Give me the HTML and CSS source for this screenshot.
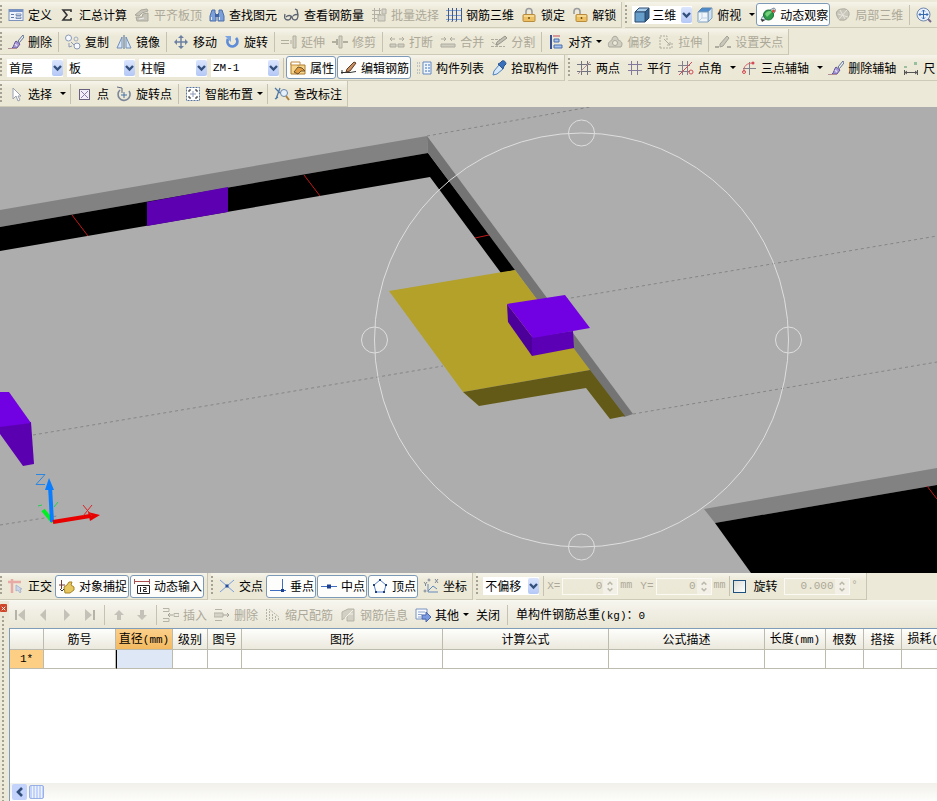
FILE: index.html
```html
<!DOCTYPE html>
<html lang="zh-CN">
<head>
  <meta charset="UTF-8" />
  <meta name="viewport" content="width=device-width, initial-scale=1.0"/>
  <title>钢筋三维</title>
  <link rel="stylesheet" href="styles.css">
</head>
<body>

  <!-- icon sprite -->
  <svg class="sprite" aria-hidden="true">
    <symbol id="define" viewBox="0 0 16 16"><rect x="1" y="2.500" width="14" height="11" fill="#eef3fb" stroke="#7d93bb"/><path d="M1 3h14v2H1z" fill="#7391c8"/><path d="M3 7.500h3M3 10.500h3" stroke="#5f78a8"/><path d="M8 7h5v1.500H8zM8 10h5v1.500H8z" fill="#fff" stroke="#5f78a8" stroke-width=".8"/></symbol>
    <symbol id="sum" viewBox="0 0 16 16"><path d="M12 5V3H4l4 5-4 5h8v-2" fill="none" stroke="#333" stroke-width="1.600"/></symbol>
    <symbol id="level" viewBox="0 0 16 16"><path d="M1 8l6-5 6-1 1 2-6 2-3 3zM2 10h6l1-3 5-1v8H3z" fill="#c6c4b8" stroke="#aaa89c"/><path d="M5 12l5-1" stroke="#eee"/></symbol>
    <symbol id="find" viewBox="0 0 16 16"><path d="M3 3h3v3l1 1V14H1V9zM10 3h3l2 6v5H9V7l1-1z" fill="#7d9fd8" stroke="#4c6eaa"/><path d="M6 7h4v3H6z" fill="#41639e"/><path d="M2.500 10v3M10.500 10v3" stroke="#dbe6f8"/></symbol>
    <symbol id="glasses" viewBox="0 0 16 16"><path d="M1 7c-1 4 0 6 3 6 2 0 3-2 3-4-2-1-4 0-5 1M8 9c0 3 1 4 3 4 3 0 3-3 3-5-2-1-4 0-5 1M14 8l-1-5-2-1" fill="none" stroke="#5b6270" stroke-width="1.300"/></symbol>
    <symbol id="batch" viewBox="0 0 16 16"><path d="M1 3.500h9M1 7.500h9M1 11.500h5M3.500 1v14M8.500 1v7" stroke="#b2b0a4" fill="none"/><path d="M7 8h7v6H7zM11 2h4v5h-4z" fill="#d6d4c8" stroke="#b2b0a4"/></symbol>
    <symbol id="mesh" viewBox="0 0 16 16"><path d="M0 3.500h16M0 8.500h16M0 12.500h16" stroke="#7fa0d4" fill="none"/><path d="M2.500 1v13l-1 1M6.500 1v13l-1 1M10.500 1v13l-1 1M15.500 1v14" stroke="#41598c" fill="none"/></symbol>
    <symbol id="lock" viewBox="0 0 16 16"><path d="M5 8V4.500a3 3 0 0 1 6 0V8" fill="none" stroke="#999b9f" stroke-width="1.600"/><rect x="2" y="7.500" width="12" height="7" rx="1" fill="#edc063" stroke="#b88c3c"/><path d="M3 9h10" stroke="#fff0bb"/><path d="M8 10v2" stroke="#765414" stroke-width="1.500"/></symbol>
    <symbol id="unlock" viewBox="0 0 16 16"><path d="M2 7V4.500a3 3 0 0 1 6 0V8" fill="none" stroke="#999b9f" stroke-width="1.600"/><rect x="4" y="7.500" width="11" height="7" rx="1" fill="#edc063" stroke="#b88c3c"/><path d="M5 9h9" stroke="#fff0bb"/><path d="M9.500 10v2" stroke="#765414" stroke-width="1.500"/></symbol>
    <symbol id="cube" viewBox="0 0 16 16"><path d="M1 5l4-4h10l-4 4z" fill="#a8cdec" stroke="#2d4a6c"/><path d="M11 5l4-4v10l-4 4z" fill="#33618f" stroke="#2d4a6c"/><path d="M1 5h10v10H1z" fill="#669fcc" stroke="#2d4a6c"/></symbol>
    <symbol id="topview" viewBox="0 0 16 16"><path d="M1 5l4-4h10l-4 4z" fill="#4c8ccc" stroke="#5d83ad"/><path d="M11 5l4-4v10l-4 4z" fill="#cfe0f0" stroke="#7f9fc0"/><path d="M1 5h10v10H1z" fill="#f1f6fb" stroke="#7f9fc0"/><path d="M5 5v6l-4 4M5 11h6" stroke="#bdd0e4" fill="none"/></symbol>
    <symbol id="orbit" viewBox="0 0 16 16"><path d="M1 13C2 9 7 4 14 1c2 1 2 3 0 5-4 5-8 7-11 7z" fill="#dfe9ee" stroke="#6d8798"/><circle cx="8.500" cy="8" r="5" fill="#2c9a48" stroke="#1c6d35"/><path d="M5 7c2-3 5-4 7-2l-5 5z" fill="#74d07a"/><circle cx="13.500" cy="4" r="1.500" fill="#d54531"/><path d="M1 12l4 1-3 2z" fill="#333"/></symbol>
    <symbol id="local3d" viewBox="0 0 16 16"><path d="M2 9c-2-4 1-7 5-7 4-1 8 2 7 6-1 4-5 6-7 5-3 1-4-2-5-4z" fill="#c8c6bb" stroke="#aeaca0"/><path d="M3 7l10 3M5 3l5 9M12 3L4 12" stroke="#e8e6dc" fill="none"/></symbol>
    <symbol id="pan" viewBox="0 0 16 16"><circle cx="7.500" cy="7.500" r="6.500" fill="#e6effb" stroke="#7188ad"/><path d="M7.500 3v9M3 7.500h9M6 4.500L7.500 3 9 4.500M6 10.500L7.500 12 9 10.500M4.500 6L3 7.500 4.500 9M10.500 6L12 7.500 10.500 9" stroke="#3866af" fill="none"/><path d="M12 12l3 3" stroke="#7a6a90" stroke-width="2"/></symbol>
    <symbol id="brush" viewBox="0 0 16 16"><path d="M15 1l-5 6 1.500 1.500L16 3z" fill="#e8eef6" stroke="#667391"/><path d="M8 7l4 3-3 4H4c2-1 2-5 4-7z" fill="#a89bd8" stroke="#65549a"/><path d="M7 10l2 2" stroke="#e2d9f3" stroke-width="1.500"/><path d="M0 14.500h9" stroke="#b08d95"/></symbol>
    <symbol id="copy" viewBox="0 0 16 16"><circle cx="3.500" cy="4" r="3" fill="#f6f9fd" stroke="#8b99b4"/><circle cx="12" cy="12" r="3" fill="#f6f9fd" stroke="#8b99b4"/><circle cx="11" cy="5" r="2" fill="none" stroke="#a1adc4"/><path d="M6 8l3 3M4 9v4l3-1" stroke="#8b99b4" fill="none"/></symbol>
    <symbol id="mirror" viewBox="0 0 16 16"><path d="M6 3v11H1zM10 3v11h5z" fill="#d7e5f5" stroke="#718fb8"/><path d="M8 1v14" stroke="#4f6e98"/></symbol>
    <symbol id="move" viewBox="0 0 16 16"><path d="M8 2v12M2 8h12" stroke="#6d80a2" stroke-width="1.500"/><path d="M8 1l3 3H5zM8 15l3-3H5zM1 8l3-3v6zM15 8l-3-3v6z" fill="#6d80a2"/></symbol>
    <symbol id="rotate" viewBox="0 0 16 16"><path d="M4 5a5 5 0 1 0 8-1" fill="none" stroke="#5f8cd8" stroke-width="2.800"/><path d="M1 2h6v6z" fill="#7ca4e2"/></symbol>
    <symbol id="extend" viewBox="0 0 16 16"><path d="M0 6.500h8M0 9.500h8M10 6v4" stroke="#b0ae9f" fill="none"/><path d="M12 2h3v12h-3z" fill="#d5d2c3" stroke="#b0ae9f"/></symbol>
    <symbol id="trim" viewBox="0 0 16 16"><path d="M0 8h5M11 8h5M5 5v6" stroke="#b0ae9f" stroke-width="2"/><path d="M7 2h3v12H7z" fill="#d5d2c3" stroke="#b0ae9f"/></symbol>
    <symbol id="break" viewBox="0 0 16 16"><path d="M1 10h6v3H1zM9 10h6v3H9z" fill="#d0cec0" stroke="#aeac9f"/><path d="M1 5h5M10 5h5M3 3L1 5l2 2M13 3l2 2-2 2" stroke="#aeac9f" fill="none"/></symbol>
    <symbol id="join" viewBox="0 0 16 16"><path d="M1 10h14v3H1z" fill="#d0cec0" stroke="#aeac9f"/><path d="M1 5h5M10 5h5M4 3l2 2-2 2M12 3l-2 2 2 2" stroke="#aeac9f" fill="none"/></symbol>
    <symbol id="split" viewBox="0 0 16 16"><path d="M0 5.500h9M0 12.500h14M1 8l6 4" fill="none" stroke="#aeac9f" stroke-dasharray="3 1"/><path d="M5 11l1-3 8-6 2 2-8 6z" fill="#c2c0b4" stroke="#98968b"/></symbol>
    <symbol id="align" viewBox="0 0 16 16"><path d="M3 1v14" stroke="#374f91" stroke-width="2"/><path d="M6 5h5v3H6zM6 11h8v3H6z" fill="#a9c4ed" stroke="#4b6fad"/><path d="M12 2H5" stroke="#c5485a"/></symbol>
    <symbol id="offset" viewBox="0 0 16 16"><path d="M2 13c-2-4 1-6 3-7 0-5 6-5 6 0 4 1 5 4 3 7z" fill="#d0cec0" stroke="#aaa89c"/><circle cx="8" cy="9" r="2.500" fill="#ece9d8" stroke="#aaa89c"/></symbol>
    <symbol id="stretch" viewBox="0 0 16 16"><path d="M2 14V2h7v4M2 14h12V9" stroke="#aeac9f" fill="none" stroke-dasharray="2 1"/><path d="M6 5l6 6M12 8v3H9" stroke="#aeac9f" fill="none"/></symbol>
    <symbol id="grip" viewBox="0 0 16 16"><path d="M0 12h4v2H0zM12 12h4v2h-4z" fill="#aeac9f"/><path d="M5 10l7-8 2 2-6 8-3 1z" fill="#c9c7ba" stroke="#a3a196"/></symbol>
    <symbol id="props" viewBox="0 0 16 16"><path d="M1 3h5l1 2h8v9H1z" fill="#f7d68b" stroke="#ad7a2d"/><path d="M1 2h9v3H1z" fill="#fff" stroke="#c18d42"/><path d="M4 12l4-5 4 1 3 3-4 0-3 3z" fill="#e29d42" stroke="#6e5330"/></symbol>
    <symbol id="edit" viewBox="0 0 16 16"><path d="M0 12.500h9l6-1" stroke="#333" fill="none"/><path d="M6 9l7-7 2 1-6 8-4 1z" fill="#c98f61" stroke="#5b3b24"/><path d="M1 10v4" stroke="#333"/></symbol>
    <symbol id="list" viewBox="0 0 16 16"><path d="M1 3h3M1 6h3M1 10h3M1 13h3" stroke="#8f9bb0" stroke-dasharray="1 1"/><path d="M7 2h8v12H7z" fill="#eef5fd" stroke="#6687bd"/><path d="M9 5h2M9 8h2M9 11h2M12 5h2M12 8h2M12 11h2" stroke="#3d70b8"/></symbol>
    <symbol id="picker" viewBox="0 0 16 16"><path d="M8 5l4 4-6 5-4 1 1-4z" fill="#d5e9fa" stroke="#5282bc"/><path d="M7 4l2-1 2-2c2-1 4 1 4 3l-2 2-1 3z" fill="#3a70bb" stroke="#2b558f"/></symbol>
    <symbol id="twopoint" viewBox="0 0 16 16"><path d="M5.500 1v14M11.500 1v14M1 4.500h14M1 11.500h14" stroke="#72757f"/><path d="M2 14L14 2" stroke="#b19298"/></symbol>
    <symbol id="parallel" viewBox="0 0 16 16"><path d="M4.500 1v14M10.500 1v14" stroke="#83799d"/><path d="M1 4.500h14M1 10.500h14" stroke="#83799d"/></symbol>
    <symbol id="pointangle" viewBox="0 0 16 16"><path d="M4.500 1v14M9.500 1v14M0 5.500h12M0 11.500h12" stroke="#81808c"/><path d="M1 15L14 2" stroke="#d44b56"/><circle cx="13" cy="12" r="2" fill="none" stroke="#d44b56"/></symbol>
    <symbol id="threepoint" viewBox="0 0 16 16"><path d="M8.500 2v13M2 8.500h13" stroke="#81808c"/><path d="M3 12c-1-6 3-9 9-9" stroke="#d4656a" fill="none"/><circle cx="3" cy="12" r="1.500" fill="none" stroke="#d44b56"/><circle cx="12" cy="3" r="1.500" fill="#d44b56"/></symbol>
    <symbol id="ruler" viewBox="0 0 16 16"><path d="M1.500 10v5M14.500 10v5M2 12.500h12M4 11l-2 1.500L4 14M12 11l2 1.500L12 14" stroke="#555" fill="none"/><path d="M1 6h3v2H1zM11 2h3v3h-3z" fill="#9abf9f"/></symbol>
    <symbol id="pointer" viewBox="0 0 16 16"><path d="M5 2v11l3-3 2 5 2-1-2-4h3z" fill="#fff" stroke="#9aa0b0"/></symbol>
    <symbol id="point" viewBox="0 0 16 16"><rect x="2.500" y="3.500" width="10" height="10" fill="#f3eff8" stroke="#69617f"/><path d="M4 5l7 7M11 5l-7 7" stroke="#8d77ac"/></symbol>
    <symbol id="rotpoint" viewBox="0 0 16 16"><path d="M4 4a6 6 0 1 0 9 1" fill="none" stroke="#7c8798" stroke-width="1.600"/><path d="M1 1l5 1v5" fill="none" stroke="#606b80"/><path d="M8 6v6M5 9h6" stroke="#4771a9"/></symbol>
    <symbol id="smart" viewBox="0 0 16 16"><rect x="1.500" y="1.500" width="13" height="13" fill="#fff" stroke="#5774a0" stroke-dasharray="2 1"/><path d="M8 5v6M5 8h6" stroke="#8b98b0"/><path d="M4 6V4h2M10 4h2v2M4 10v2h2M12 10v2h-2" fill="none" stroke="#222"/></symbol>
    <symbol id="check" viewBox="0 0 16 16"><path d="M1 2l5 5M6 2L2 13M1 13l3-2" stroke="#4e78a8" fill="none" stroke-width="1.300"/><circle cx="10" cy="7" r="3.500" fill="#e5f0fb" stroke="#6684ab"/><path d="M12 10l3 4" stroke="#b0813e" stroke-width="2"/></symbol>
    <symbol id="ortho" viewBox="0 0 16 16"><path d="M0 4h13M4 1v14" stroke="#e7aaa4" stroke-width="2.500"/><path d="M8 7v6l2-1 2 3 1-1-1-3h2z" fill="#ccd5ea" stroke="#9daac8" stroke-width=".7"/></symbol>
    <symbol id="snap" viewBox="0 0 16 16"><path d="M2.500 2v9M0 7h6" stroke="#6f3b38"/><path d="M5 9l3-2 2-3h3l-1 3 3 2v3l-4 3H6z" fill="#e5c65f" stroke="#a68429"/><path d="M1 11l2 2 2-2" fill="none" stroke="#333"/></symbol>
    <symbol id="dyninput" viewBox="0 0 16 16"><path d="M0 3.500h16M.5 1v5M15.500 1v5" stroke="#a94f4f"/><path d="M3.500 7.500h12v8h-12z" fill="#fff" stroke="#222"/><path d="M6.500 9v5M9 9.500h3V11.500H9.500v2H13" stroke="#222" fill="none"/></symbol>
    <symbol id="cross" viewBox="0 0 16 16"><path d="M1 2l14 12M15 2L1 14" stroke="#7b9ede"/><path d="M6.500 6.500h3v3h-3z" fill="#264c9e"/></symbol>
    <symbol id="perp" viewBox="0 0 16 16"><path d="M0 12.500h16M12.500 1v12" stroke="#3f6ec0"/><path d="M11 11h3v3h-3z" fill="#1c3f90"/></symbol>
    <symbol id="mid" viewBox="0 0 16 16"><path d="M0 8.500h16" stroke="#3f6ec0"/><path d="M6 6.500h4v4H6z" fill="#1c3f90"/></symbol>
    <symbol id="vertex" viewBox="0 0 16 16"><path d="M8 2l6 5-2 7H4L2 7z" fill="none" stroke="#5682d0"/><path d="M7 1h2v2H7zM13 6h2v2h-2zM1 6h2v2H1zM3 13h2v2H3zM11 13h2v2h-2z" fill="#1f3f80"/></symbol>
    <symbol id="coord" viewBox="0 0 16 16"><path d="M5 6v8h10M5 13l5-5 4 3" stroke="#6489bd" fill="none"/><path d="M1 4l1.500 2L4 4M2.500 6v2M12 1l3 4M15 1l-3 4" stroke="#7e8795" fill="none"/><circle cx="2" cy="13" r="1" fill="none" stroke="#7e8795"/><circle cx="6" cy="2" r="1" fill="none" stroke="#7e8795"/></symbol>
    <symbol id="first" viewBox="0 0 16 16"><path d="M4 3v10" stroke="#b5b3a8" stroke-width="2"/><path d="M13 2v12L6 8z" fill="#c4c2b8"/></symbol>
    <symbol id="prev" viewBox="0 0 16 16"><path d="M11 2v12L5 8z" fill="#c4c2b8"/></symbol>
    <symbol id="next" viewBox="0 0 16 16"><path d="M6 2v12l6-6z" fill="#c4c2b8"/></symbol>
    <symbol id="last" viewBox="0 0 16 16"><path d="M13 3v10" stroke="#b5b3a8" stroke-width="2"/><path d="M4 2v12l7-6z" fill="#c4c2b8"/></symbol>
    <symbol id="up" viewBox="0 0 16 16"><path d="M9 3l5 5h-3v5H7V8H4z" fill="#c4c2b8"/></symbol>
    <symbol id="down" viewBox="0 0 16 16"><path d="M9 13l5-5h-3V3H7v5H4z" fill="#c4c2b8"/></symbol>
    <symbol id="insert" viewBox="0 0 16 16"><path d="M0 1.500h6v3H0M0 11.500h6v3H0M11 6.500h5v3h-5z" stroke="#b5b3a6" fill="none"/><path d="M5 8h5M7 6L5 8l2 2" stroke="#a6a498" fill="none"/></symbol>
    <symbol id="remove" viewBox="0 0 16 16"><path d="M1 2.500h7M1 13.500h7M0 6h9v4H0z" stroke="#b5b3a6" fill="#d5d3c7"/><path d="M9 8h6M13 6l2 2-2 2" stroke="#a6a498" fill="none"/></symbol>
    <symbol id="scale" viewBox="0 0 16 16"><path d="M1.500 2v12M4.500 4v10M7.500 7v7M10.500 9v5M13.500 11v3M4 2l10 8" stroke="#b5b3a6" stroke-dasharray="2 1" fill="none"/></symbol>
    <symbol id="info" viewBox="0 0 16 16"><path d="M2 5l6-3h6v12H7V9l-5 4z" fill="#d2d0c5" stroke="#b5b3a6"/><path d="M5 11l8-8M9 7h4" stroke="#f3f1e7"/></symbol>
    <symbol id="other" viewBox="0 0 16 16"><path d="M1 2h11v10H1z" fill="#f7faff" stroke="#7b93bf"/><path d="M3 5h7M3 7.500h4M3 10h3" stroke="#8da5cd"/><path d="M7 8h4V5l5 5-5 5v-3H7z" fill="#7999e0" stroke="#4c68ac"/></symbol>
    <symbol id="chevron" viewBox="0 0 11 16"><path d="M2 6l3.500 3.500L9 6" fill="none" stroke="#33507c" stroke-width="2.400"/></symbol>
    <symbol id="chevleft" viewBox="0 0 16 16"><path d="M10 4L6 8l4 4" fill="none" stroke="#33507c" stroke-width="2.600"/></symbol>
    <symbol id="spinner" viewBox="0 0 14 16"><path d="M4.500 6L7 3.500 9.500 6M4.500 10L7 12.500 9.500 10" fill="none" stroke="#bbb9ac" stroke-width="1.600"/></symbol>
  </svg>

  <header class="toolbars">
    <div class="row row-first">
      <div class="toolbar">
        <button class="tool"><svg class="icon"><use href="#define"/></svg>定义</button>
        <button class="tool"><svg class="icon"><use href="#sum"/></svg>汇总计算</button>
        <button class="tool" disabled><svg class="icon"><use href="#level"/></svg>平齐板顶</button>
        <button class="tool"><svg class="icon"><use href="#find"/></svg>查找图元</button>
        <button class="tool"><svg class="icon"><use href="#glasses"/></svg>查看钢筋量</button>
        <button class="tool" disabled><svg class="icon"><use href="#batch"/></svg>批量选择</button>
        <button class="tool"><svg class="icon"><use href="#mesh"/></svg>钢筋三维</button>
        <button class="tool"><svg class="icon"><use href="#lock"/></svg>锁定</button>
        <button class="tool"><svg class="icon"><use href="#unlock"/></svg>解锁</button>
      </div>
      <div class="toolbar">
        <div class="combo combo-icon">
          <svg class="icon"><use href="#cube"/></svg>
          <select aria-label="视图模式"><option>三维</option></select>
          <svg class="combo-arrow"><use href="#chevron"/></svg>
        </div>
        <button class="tool drop wide"><svg class="icon"><use href="#topview"/></svg>俯视</button>
        <button class="tool pressed" aria-pressed="true"><svg class="icon"><use href="#orbit"/></svg>动态观察</button>
        <button class="tool" disabled><svg class="icon"><use href="#local3d"/></svg>局部三维</button>
        <span class="sep"></span>
        <button class="tool" aria-label="平移"><svg class="icon"><use href="#pan"/></svg></button>
      </div>
    </div>

    <div class="row">
      <div class="toolbar">
        <button class="tool"><svg class="icon"><use href="#brush"/></svg>删除</button>
        <span class="sep"></span>
        <button class="tool"><svg class="icon"><use href="#copy"/></svg>复制</button>
        <button class="tool"><svg class="icon"><use href="#mirror"/></svg>镜像</button>
        <span class="sep"></span>
        <button class="tool"><svg class="icon"><use href="#move"/></svg>移动</button>
        <button class="tool"><svg class="icon"><use href="#rotate"/></svg>旋转</button>
        <span class="sep"></span>
        <button class="tool" disabled><svg class="icon"><use href="#extend"/></svg>延伸</button>
        <button class="tool" disabled><svg class="icon"><use href="#trim"/></svg>修剪</button>
        <span class="sep"></span>
        <button class="tool" disabled><svg class="icon"><use href="#break"/></svg>打断</button>
        <button class="tool" disabled><svg class="icon"><use href="#join"/></svg>合并</button>
        <button class="tool" disabled><svg class="icon"><use href="#split"/></svg>分割</button>
        <span class="sep"></span>
        <button class="tool drop"><svg class="icon"><use href="#align"/></svg>对齐</button>
        <button class="tool" disabled><svg class="icon"><use href="#offset"/></svg>偏移</button>
        <button class="tool" disabled><svg class="icon"><use href="#stretch"/></svg>拉伸</button>
        <span class="sep"></span>
        <button class="tool" disabled><svg class="icon"><use href="#grip"/></svg>设置夹点</button>
      </div>
    </div>

    <div class="row">
      <div class="toolbar">
        <div class="combo combo-small">
          <select aria-label="楼层"><option>首层</option></select>
          <svg class="combo-arrow"><use href="#chevron"/></svg>
        </div>
        <div class="combo">
          <select aria-label="构件类别"><option>板</option></select>
          <svg class="combo-arrow"><use href="#chevron"/></svg>
        </div>
        <div class="combo">
          <select aria-label="构件类型"><option>柱帽</option></select>
          <svg class="combo-arrow"><use href="#chevron"/></svg>
        </div>
        <div class="combo">
          <select class="latin" aria-label="构件名称"><option>ZM-1</option></select>
          <svg class="combo-arrow"><use href="#chevron"/></svg>
        </div>
        <span class="sep"></span>
        <button class="tool pressed" aria-pressed="true"><svg class="icon"><use href="#props"/></svg>属性</button>
        <button class="tool pressed" aria-pressed="true"><svg class="icon"><use href="#edit"/></svg>编辑钢筋</button>
        <button class="tool"><svg class="icon"><use href="#list"/></svg>构件列表</button>
        <button class="tool"><svg class="icon"><use href="#picker"/></svg>拾取构件</button>
      </div>
      <div class="toolbar">
        <button class="tool"><svg class="icon"><use href="#twopoint"/></svg>两点</button>
        <button class="tool"><svg class="icon"><use href="#parallel"/></svg>平行</button>
        <button class="tool drop wide"><svg class="icon"><use href="#pointangle"/></svg>点角</button>
        <button class="tool drop wide"><svg class="icon"><use href="#threepoint"/></svg>三点辅轴</button>
        <button class="tool"><svg class="icon"><use href="#brush"/></svg>删除辅轴</button>
        <button class="tool"><svg class="icon"><use href="#ruler"/></svg>尺</button>
      </div>
    </div>

    <div class="row">
      <div class="toolbar">
        <button class="tool drop wide"><svg class="icon"><use href="#pointer"/></svg>选择</button>
        <span class="sep"></span>
        <button class="tool"><svg class="icon"><use href="#point"/></svg>点</button>
        <button class="tool"><svg class="icon"><use href="#rotpoint"/></svg>旋转点</button>
        <span class="sep"></span>
        <button class="tool drop"><svg class="icon"><use href="#smart"/></svg>智能布置</button>
        <span class="sep"></span>
        <button class="tool"><svg class="icon"><use href="#check"/></svg>查改标注</button>
      </div>
    </div>
  </header>

  <main>
    <svg class="scene" viewBox="0 107 937 466" role="img" aria-label="三维视图">
      <!-- axis grid -->
      <g class="axis-lines">
        <path d="M427 136L590 107M565 299L937 236M33 435L443 366M633 414L937 362M0 525L57 516"/>
      </g>
      <!-- walls -->
      <polygon fill="#828282" points="0,210 427,136 428,153 0,227"/>
      <polygon fill="#000" points="0,227 428,153 516,270 501,273 430,177 0,251"/>
      <polygon fill="#747474" points="427,136 633,414 624,417 428,153"/>
      <polygon fill="#828282" points="704,509 937,468 937,485 715,523"/>
      <polygon fill="#000" points="715,523 937,485 937,573 751,573"/>
      <path class="red-line" d="M72 215L88 236M304 175L320 196M475 238L489 235M927 486L937 499"/>
      <!-- column caps -->
      <polygon fill="#5c00b2" points="147,202 228,187 228,212 147,226"/>
      <polygon fill="#b3a129" points="389,291 515,270 590,370 463,392"/>
      <polygon fill="#645a17" points="463,392 590,370 625,416 610,419 586,388 479,406"/>
      <polygon fill="#4d0099" points="507,304 533,338 532,356 508,322"/>
      <polygon fill="#5b00b5" points="532,337 573,331 574,348 532,356"/>
      <polygon fill="#7100e2" points="507,304 565,295 590,328 533,338"/>
      <polygon fill="#5b00b0" points="0,426 31,422 34,464 23,466 0,434"/>
      <polygon fill="#7100e2" points="0,392 9,392 31,423 0,427"/>
      <!-- orbit ring -->
      <g class="orbit">
        <circle cx="581.500" cy="340" r="207"/>
        <circle cx="581.500" cy="133" r="13"/>
        <circle cx="788.500" cy="340" r="13"/>
        <circle cx="581.500" cy="547" r="13"/>
        <circle cx="374.500" cy="340" r="13"/>
      </g>
      <!-- coordinate axes -->
      <path d="M53 522L43 510" stroke="#00f020" stroke-width="4"/>
      <path d="M38 506l4-1M54 507l4-5" stroke="#20d050"/>
      <path d="M52 522L50 486" stroke="#0a7dff" stroke-width="4"/>
      <polygon fill="#0a7dff" points="49,478 54,490 45,490"/>
      <path d="M53 522L90 516" stroke="#e80000" stroke-width="4"/>
      <polygon fill="#e80000" points="100,515 88,512 90,521"/>
      <path d="M36 474.500h9l-9 10h9" fill="none" stroke="#2a86e0"/>
      <path d="M83 505l9 11M92 505l-9 11" stroke="#e02020"/>
    </svg>
  </main>

  <div class="row snapbar">
    <div class="toolbar">
      <button class="tool"><svg class="icon"><use href="#ortho"/></svg>正交</button>
      <button class="tool pressed" aria-pressed="true"><svg class="icon"><use href="#snap"/></svg>对象捕捉</button>
      <button class="tool pressed" aria-pressed="true"><svg class="icon"><use href="#dyninput"/></svg>动态输入</button>
    </div>
    <div class="toolbar">
      <button class="tool"><svg class="icon"><use href="#cross"/></svg>交点</button>
      <button class="tool pressed" aria-pressed="true"><svg class="icon"><use href="#perp"/></svg>垂点</button>
      <button class="tool pressed" aria-pressed="true"><svg class="icon"><use href="#mid"/></svg>中点</button>
      <button class="tool pressed" aria-pressed="true"><svg class="icon"><use href="#vertex"/></svg>顶点</button>
      <button class="tool"><svg class="icon"><use href="#coord"/></svg>坐标</button>
    </div>
    <div class="toolbar">
      <div class="combo combo-small">
        <select aria-label="偏移方式"><option>不偏移</option></select>
        <svg class="combo-arrow"><use href="#chevron"/></svg>
      </div>
      <span class="sep"></span>
      <div class="offsets">
        <div class="field">
          <label class="latin" for="offset-x">X=</label>
          <span class="number"><input class="latin" id="offset-x" value="0" disabled><svg class="spin"><use href="#spinner"/></svg></span>
          <span class="latin unit">mm</span>
        </div>
        <div class="field">
          <label class="latin" for="offset-y">Y=</label>
          <span class="number"><input class="latin" id="offset-y" value="0" disabled><svg class="spin"><use href="#spinner"/></svg></span>
          <span class="latin unit">mm</span>
        </div>
      </div>
      <span class="sep"></span>
      <label class="check"><input type="checkbox">旋转</label>
      <div class="field angle">
        <span class="number number-wide"><input class="latin" aria-label="旋转角度" value="0.000" disabled><svg class="spin"><use href="#spinner"/></svg></span>
        <span class="latin unit">°</span>
      </div>
    </div>
  </div>

  <section class="panel">
    <div class="panel-side">
      <button class="close" aria-label="关闭面板"><svg viewBox="0 0 8 8"><path d="M2 2l4 4M6 2L2 6" stroke="#fff"/></svg></button>
      <span class="panel-grip"></span>
    </div>
    <div class="panel-body">
      <div class="panel-bar">
        <button class="nav" aria-label="首行" disabled><svg class="icon"><use href="#first"/></svg></button>
        <button class="nav" aria-label="上一行" disabled><svg class="icon"><use href="#prev"/></svg></button>
        <button class="nav" aria-label="下一行" disabled><svg class="icon"><use href="#next"/></svg></button>
        <button class="nav" aria-label="末行" disabled><svg class="icon"><use href="#last"/></svg></button>
        <span class="sep"></span>
        <button class="nav" aria-label="上移" disabled><svg class="icon"><use href="#up"/></svg></button>
        <button class="nav" aria-label="下移" disabled><svg class="icon"><use href="#down"/></svg></button>
        <span class="sep"></span>
        <button class="tool" disabled><svg class="icon"><use href="#insert"/></svg>插入</button>
        <button class="tool" disabled><svg class="icon"><use href="#remove"/></svg>删除</button>
        <button class="tool" disabled><svg class="icon"><use href="#scale"/></svg>缩尺配筋</button>
        <button class="tool" disabled><svg class="icon"><use href="#info"/></svg>钢筋信息</button>
        <button class="tool drop"><svg class="icon"><use href="#other"/></svg>其他</button>
        <button class="tool plain">关闭</button>
        <span class="sep"></span>
        <span class="total">单构件钢筋总重<span class="latin">(kg)</span>：<span class="latin">0</span></span>
      </div>
      <div class="grid">
        <table>
          <colgroup>
            <col class="w-head"><col class="w-name"><col class="w-dia"><col class="w-grade"><col class="w-fig">
            <col class="w-shape"><col class="w-formula"><col class="w-desc"><col class="w-len"><col class="w-num"><col class="w-num"><col class="w-loss">
          </colgroup>
          <thead>
            <tr>
              <th></th>
              <th>筋号</th>
              <th class="current">直径<span class="latin">(mm)</span></th>
              <th>级别</th>
              <th>图号</th>
              <th>图形</th>
              <th>计算公式</th>
              <th>公式描述</th>
              <th>长度<span class="latin">(mm)</span></th>
              <th>根数</th>
              <th>搭接</th>
              <th>损耗<span class="latin">(%)</span></th>
            </tr>
          </thead>
          <tbody>
            <tr>
              <th class="current latin" scope="row">1*</th>
              <td></td>
              <td class="active"></td>
              <td></td><td></td><td></td><td></td><td></td><td></td><td></td><td></td><td></td>
            </tr>
          </tbody>
        </table>
      </div>
      <div class="scrollbar">
        <button aria-label="向左滚动"><svg class="icon"><use href="#chevleft"/></svg></button>
        <span class="thumb"></span>
      </div>
    </div>
  </section>

</body>
</html>
```
FILE: styles.css
```css
* {
  box-sizing: border-box;
}

body {
  margin: 0;
  min-height: 100vh;
  display: flex;
  flex-direction: column;
  overflow-x: hidden;
  background-color: #ece9d8;
  font-family: "Noto Sans CJK SC", sans-serif;
  font-size: 12px;
  line-height: 16px;
  color: #000;
}

button,
select,
input {
  font: inherit;
  color: inherit;
  margin: 0;
  padding: 0;
}

.sprite {
  position: absolute;
  width: 0;
  height: 0;
}

.latin {
  font-family: "Liberation Mono", monospace;
  font-size: 11px;
}

.icon {
  width: 16px;
  height: 16px;
  flex: none;
}

/* toolbars */
.row {
  display: flex;
  gap: 3px;
  height: 26px;
  overflow: hidden;
}

.row-first {
  height: 29px;
  padding: 2px 0 1px;
}

.toolbar {
  display: flex;
  align-items: center;
  flex: none;
  padding-right: 2px;
  border-right: 1px solid #c9c6b4;
  border-bottom: 1px solid #cdcab8;
  background: linear-gradient(#f6f4ea, #ece9d8 30%, #ebe8d6);
}

.toolbar::before {
  content: "";
  width: 2px;
  height: 20px;
  margin-right: 2px;
  background: repeating-linear-gradient(#a5a293 0 2px, transparent 2px 4px);
}

.tool {
  display: flex;
  align-items: center;
  flex: none;
  gap: 4px;
  height: 23px;
  padding: 0 1px 0 3px;
  margin-right: 1px;
  border: 1px solid transparent;
  border-radius: 3px;
  background: none;
  white-space: nowrap;
}

.tool:disabled {
  color: #aca899;
}

.pressed {
  background-color: #fdfdfb;
  border-color: #7c9ab8;
}

.drop {
  padding-right: 0;
  margin-right: 0;
}

.drop::after {
  content: "";
  border: 3px solid transparent;
  border-top-color: #000;
  border-bottom: 0;
}

.wide::after {
  margin-left: 4px;
}

.plain {
  padding: 0;
  margin: 0 3px 0 5px;
}

.sep {
  flex: none;
  width: 1px;
  height: 20px;
  margin: 0 2px 0 3px;
  background-color: #c5c2b2;
}

.combo {
  position: relative;
  display: flex;
  align-items: center;
  width: 68px;
  height: 18px;
  margin: 0 1px 0 3px;
  background-color: #fff;
}

.combo-small {
  width: 56px;
}

.combo-icon {
  width: 60px;
  padding-left: 2px;
}

.combo select {
  appearance: none;
  width: 100%;
  height: 18px;
  padding-left: 2px;
  border: 0;
  background: none;
}

.combo-arrow {
  position: absolute;
  top: 1px;
  right: 0;
  width: 11px;
  height: 16px;
  border-radius: 2px;
  background: linear-gradient(#dbe5fd, #b4c8f6);
  pointer-events: none;
}

/* 3D view */
.scene {
  display: block;
  width: 100%;
  background-color: #adadad;
}

.axis-lines {
  fill: none;
  stroke: #858585;
  stroke-dasharray: 3 3;
}

.red-line {
  fill: none;
  stroke: #c01818;
}

.orbit {
  fill: none;
  stroke: #dedede;
}

/* snap bar */
.snapbar {
  height: 27px;
}

.offsets {
  display: flex;
  gap: 8px;
  margin-left: 1px;
}

.field {
  display: flex;
  align-items: center;
  gap: 2px;
  color: #aca899;
}

.field .unit {
  font-size: 10px;
}

.angle {
  margin-right: 6px;
}

.number {
  display: flex;
  width: 56px;
  height: 17px;
  border: 1px solid #faf9f3;
}

.number-wide {
  width: 66px;
}

.number input {
  flex: 1;
  min-width: 0;
  border: 0;
  background: none;
  text-align: right;
}

.spin {
  flex: none;
  width: 14px;
  height: 15px;
  margin-left: 1px;
  background-color: #f3f1e7;
}

.check {
  display: flex;
  align-items: center;
  gap: 8px;
  margin: 0 6px 0 1px;
}

.check input {
  appearance: none;
  width: 13px;
  height: 13px;
  border: 1px solid #1c5180;
  background: linear-gradient(135deg, #dcdcd7, #fff);
}

/* rebar panel */
.panel {
  flex: 1;
  display: flex;
  min-height: 200px;
  border-top: 1px solid #f8f7f0;
}

.panel-side {
  display: flex;
  flex-direction: column;
  gap: 4px;
  flex: none;
  width: 9px;
  padding-top: 3px;
}

.close {
  width: 7px;
  height: 8px;
  border: 0;
  border-radius: 1px;
  background-color: #cf4527;
}

.close svg {
  display: block;
}

.panel-grip {
  flex: 1;
  width: 2px;
  margin-left: 2px;
  background: repeating-linear-gradient(#a5a293 0 2px, transparent 2px 4px);
}

.panel-body {
  flex: 1;
  min-width: 0;
  display: flex;
  flex-direction: column;
}

.panel-bar {
  display: flex;
  align-items: center;
  height: 27px;
  background: linear-gradient(#f6f5ee, #e9e6d5);
}

.nav {
  display: flex;
  align-items: center;
  justify-content: center;
  width: 22px;
  height: 22px;
  margin-right: 1px;
  border: 0;
  background: none;
}

.total {
  margin-left: 6px;
  white-space: nowrap;
}

.grid {
  flex: 1;
  overflow: hidden;
  border-top: 1px solid #7f9db9;
  border-left: 1px solid #7f9db9;
  background-color: #fff;
}

table {
  width: 948px;
  table-layout: fixed;
  border-collapse: separate;
  border-spacing: 0;
}

th,
td {
  height: 19px;
  padding: 0;
  border-right: 1px solid #bdbbae;
  border-bottom: 1px solid #bdbbae;
  font-weight: normal;
  line-height: 18px;
  text-align: center;
  white-space: nowrap;
}

thead th {
  height: 20px;
  background: linear-gradient(#fefefc, #ebe9dd);
}

thead .current {
  background: linear-gradient(#fbd08b, #f3b95f);
}

tbody .current {
  background-color: #fdcf85;
}

.active {
  border-left: 1px solid #000;
  background-color: #dde7f5;
}

.w-head { width: 34px; }
.w-name { width: 72px; }
.w-dia { width: 57px; }
.w-grade { width: 35px; }
.w-fig { width: 34px; }
.w-shape { width: 201px; }
.w-formula { width: 166px; }
.w-desc { width: 156px; }
.w-len { width: 61px; }
.w-num { width: 38px; }
.w-loss { width: 56px; }

.scrollbar {
  display: flex;
  align-items: center;
  gap: 2px;
  height: 18px;
  padding-left: 2px;
  border-left: 1px solid #7f9db9;
  background: linear-gradient(#f1f0ea, #fdfdfb);
}

.scrollbar button {
  width: 15px;
  height: 16px;
  border: 0;
  border-radius: 2px;
  background-color: #c3d3fb;
}

.scrollbar .icon {
  display: block;
}

.thumb {
  width: 15px;
  height: 14px;
  border: 1px solid #98b0e4;
  border-radius: 2px;
  background: repeating-linear-gradient(90deg, #c3d3fb 0 2px, #eef4fe 2px 3px);
}
```
